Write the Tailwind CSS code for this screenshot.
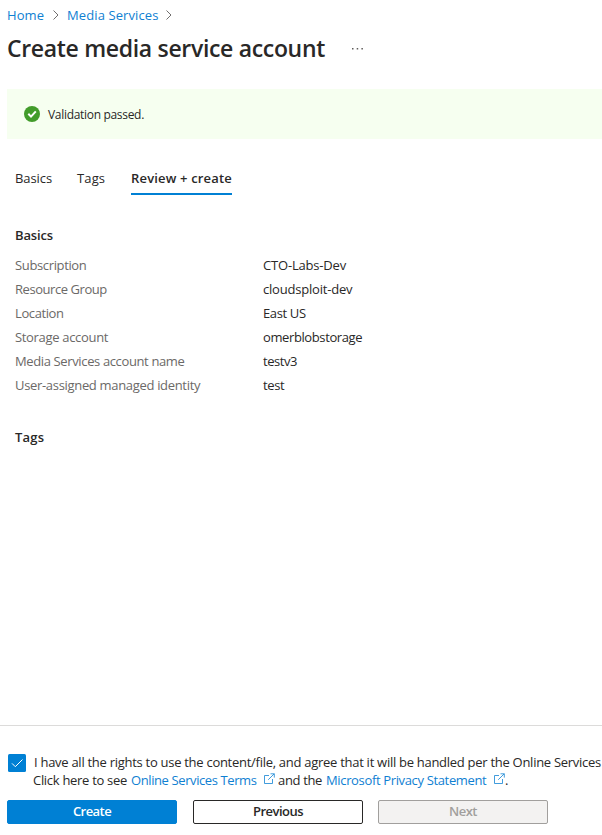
<!DOCTYPE html>
<html lang="en">
<head>
<meta charset="utf-8">
<title>Create media service account</title>
<script src="https://cdn.jsdelivr.net/npm/@tailwindcss/browser@4"></script>
</head>
<body class="bg-white">
<div class="flex h-[835px] w-[602px] flex-col overflow-hidden bg-white font-['Open_Sans','Noto_Sans',sans-serif] text-[13px] leading-[18px] text-[#292827]">
  <nav class="flex h-[30px] items-center pl-[7px] text-[#0f80d2]">
    <a class="w-[38px] whitespace-nowrap tracking-[0.1px]">Home</a>
    <svg class="ml-[8px] h-[10px] w-[6px]" viewBox="0 0 6 10" fill="none" stroke="#605e5c" stroke-width=".9"><path d="M.5.5 5 5 .5 9.5"/></svg>
    <a class="ml-[8px] w-[92px] whitespace-nowrap tracking-[0.1px]">Media Services</a>
    <svg class="ml-[7px] h-[10px] w-[6px]" viewBox="0 0 6 10" fill="none" stroke="#605e5c" stroke-width=".9"><path d="M.5.5 5 5 .5 9.5"/></svg>
  </nav>
  <header class="flex h-[59px] pl-[7px]">
    <h1 class="mt-[2px] w-[320px] text-[23px] font-semibold leading-[32px] tracking-[-0.32px] whitespace-nowrap">Create media service account</h1>
    <svg class="mt-[18px] ml-[25px] h-[2px] w-[12px]" viewBox="0 0 12 2" fill="#605e5c"><path d="M0 0h1.5v1.5H0zM4.7 0h1.5v1.5H4.7zM9.4 0h1.5v1.5H9.4z"/></svg>
  </header>
  <section class="ml-[7px] flex h-[50px] shrink-0 items-center bg-[#f6fff0] pl-[17px]">
    <svg class="h-4 w-4" viewBox="0 0 16 16"><circle cx="8" cy="8" r="8" fill="#429c2b"/><path d="m4.3 7.8 2.7 2.8 4.8-5.3" fill="none" stroke="#fff" stroke-width="2"/></svg>
    <p class="ml-2 pt-[2px] text-[12px] tracking-[-0.31px]">Validation passed.</p>
  </section>
  <div class="mt-[30px] flex h-[26px] shrink-0 pl-[15px]">
    <span class="w-[62px] tracking-[-0.08px]">Basics</span>
    <span class="w-[54px] tracking-[0.14px]">Tags</span>
    <span class="w-[101px] border-b-2 border-[#0080d4] font-semibold tracking-[0.17px] whitespace-nowrap">Review + create</span>
  </div>
  <main class="grow pt-[31px] pl-[15px]">
    <h2 class="font-semibold tracking-[-0.14px]">Basics</h2>
    <dl class="mt-[9px] grid grid-cols-[248px_1fr] leading-6 text-[#6b6967] [&>dd]:text-[#292827]">
      <dt class="tracking-[-0.36px]">Subscription</dt><dd class="tracking-[-0.18px]">CTO-Labs-Dev</dd>
      <dt class="tracking-[-0.44px]">Resource Group</dt><dd class="tracking-[-0.2px]">cloudsploit-dev</dd>
      <dt class="tracking-[-0.4px]">Location</dt><dd class="tracking-[-0.36px]">East US</dd>
      <dt class="tracking-[-0.32px]">Storage account</dt><dd class="tracking-[-0.39px]">omerblobstorage</dd>
      <dt class="tracking-[-0.37px]">Media Services account name</dt><dd class="tracking-[-0.44px]">testv3</dd>
      <dt class="tracking-[-0.32px]">User-assigned managed identity</dt><dd class="tracking-[-0.4px]">test</dd>
    </dl>
    <h2 class="mt-[31px] font-semibold tracking-[0.24px]">Tags</h2>
  </main>
  <footer class="h-[110px] shrink-0 border-t border-[#dcdbda] pt-[27px] pl-[7px]">
    <div class="flex h-[36px]">
      <svg class="mt-[1px] ml-px h-[18px] w-[18px] shrink-0" viewBox="0 0 18 18"><rect width="18" height="18" rx="1.5" fill="#0080d4"/><path d="m4 9.4 3.3 3.3 7.2-7.2" fill="none" stroke="#fff" stroke-width="1"/></svg>
      <div class="ml-[7px] whitespace-nowrap">
        <p class="pl-px tracking-[-0.278px]">I have all the rights to use the content/file, and agree that it will be handled per the Online Services</p>
        <p class="flex">
          <span class="w-[98px] tracking-[-0.3px]">Click here to see</span>
          <a class="w-[132px] tracking-[-0.4px] text-[#0f80d2]">Online Services Terms</a>
          <svg class="mt-[2px] h-[12px] w-[13px]" viewBox="0 0 13 12" fill="none" stroke="#1f8ad6" stroke-width=".85"><path d="M6 2.5H1.5v8h8V6M5.2 6.8 11.2.8M7.5.8h3.8v3.8"/></svg>
          <span class="ml-[2px] w-[48px] tracking-[-0.34px]">and the</span>
          <a class="w-[167px] tracking-[-0.35px] text-[#0f80d2]">Microsoft Privacy Statement</a>
          <svg class="mt-[2px] h-[12px] w-[13px]" viewBox="0 0 13 12" fill="none" stroke="#1f8ad6" stroke-width=".85"><path d="M6 2.5H1.5v8h8V6M5.2 6.8 11.2.8M7.5.8h3.8v3.8"/></svg>
          <span class="-ml-px">.</span>
        </p>
      </div>
    </div>
    <div class="mt-[11px] flex text-center font-semibold leading-[20px]">
      <button class="h-6 w-[170px] rounded-xs border border-[#0080d4] bg-[#0080d4] pb-[2px] tracking-[-0.55px] text-white">Create</button>
      <button class="ml-4 h-6 w-[170px] rounded-xs border border-[#292827] bg-white pb-[2px] tracking-[-0.5px]">Previous</button>
      <button class="ml-[15px] h-6 w-[170px] rounded-xs border border-[#a19f9d] bg-[#f3f2f1] pb-[2px] tracking-[-0.48px] text-[#a19f9d]" disabled>Next</button>
    </div>
  </footer>
</div>
</body>
</html>
